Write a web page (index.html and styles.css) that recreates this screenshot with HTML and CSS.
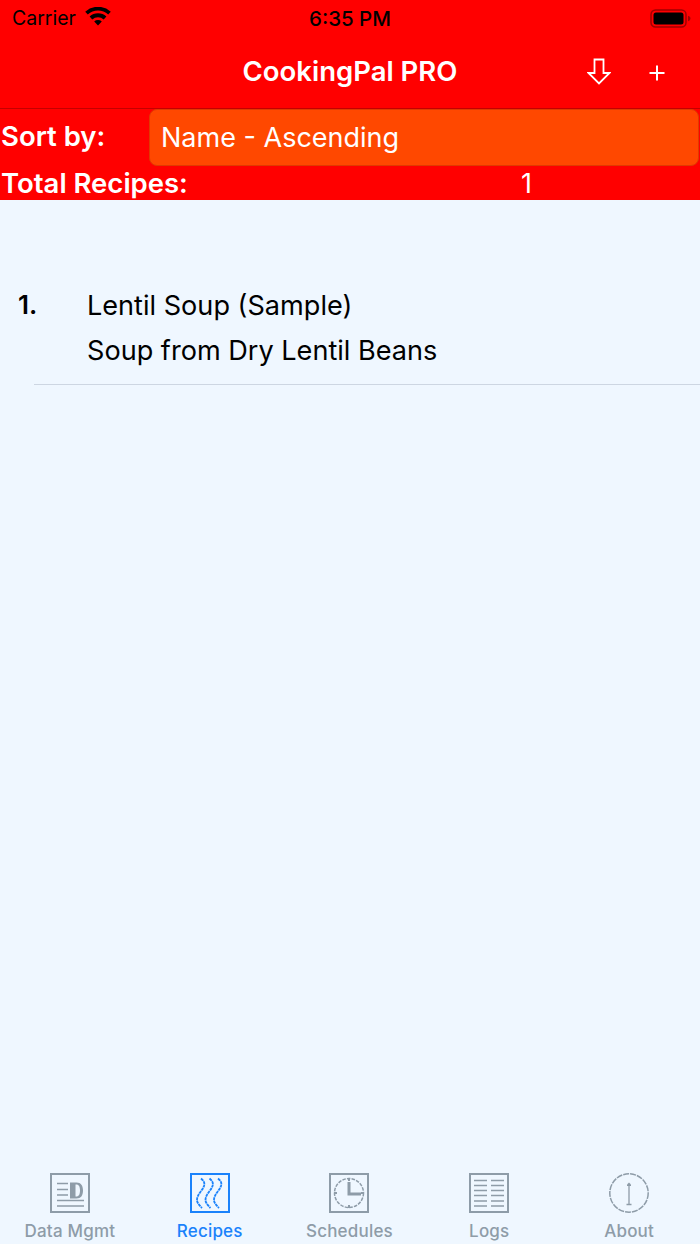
FILE: index.html
```html
<!DOCTYPE html>
<html>
<head>
  <meta charset="UTF-8"/>
  <title>CookingPal PRO</title>
  <link rel="stylesheet" href="styles.css">
</head>
<body>
<div class="app">
  <div class="header">
    <div class="status">
      <div class="status-left">
        <span class="carrier">Carrier</span>
        <svg class="wifi" width="26" height="19" viewBox="0 0 26 19">
          <path d="M13 18.500 9.200 14.400a5.600 5.600 0 0 1 7.600 0z" fill="#000"/>
          <path d="M7.300 12.400 4.600 9.500a12.400 12.400 0 0 1 16.800 0l-2.700 2.900a8.400 8.400 0 0 0-11.400 0z" fill="#000"/>
          <path d="M2.800 7.600 0.200 4.800a18.800 18.800 0 0 1 25.600 0l-2.600 2.800a15 15 0 0 0-20.400 0z" fill="#000"/>
        </svg>
      </div>
      <div class="clock">6:35 PM</div>
      <div class="status-right">
        <svg width="41" height="19" viewBox="0 0 41 19">
          <rect x="1" y="1" width="35" height="17" rx="4.500" fill="none" stroke="#a00000" stroke-width="1.500"/>
          <rect x="3.500" y="3.500" width="30" height="12" rx="2.500" fill="#000"/>
          <path d="M38 6.800c1.500.4 2.500 1.500 2.500 2.700s-1 2.300-2.500 2.700z" fill="#a00000"/>
        </svg>
      </div>
    </div>
    <div class="nav">
      <div class="nav-title">CookingPal PRO</div>
      <div class="nav-buttons">
        <svg class="nav-down" width="24" height="27" viewBox="0 0 24 27">
          <path d="M7.500 1.500h9v13.500h6L12 25.500 1.500 15h6z" fill="none" stroke="#fff" stroke-width="1.800"/>
        </svg>
        <svg class="nav-add" width="16" height="16" viewBox="0 0 16 16">
          <path d="M8 .5v15M.5 8h15" fill="none" stroke="#fff" stroke-width="2"/>
        </svg>
      </div>
    </div>
    <div class="sort-row">
      <div class="sort-label">Sort by:</div>
      <div class="sort-box">Name - Ascending</div>
    </div>
    <div class="total-row">
      <div class="total-label">Total Recipes:</div>
      <div class="total-count">1</div>
    </div>
  </div>

  <div class="list">
    <div class="recipe">
      <div class="recipe-num">1.</div>
      <div class="recipe-text">
        <div class="recipe-line">Lentil Soup (Sample)</div>
        <div class="recipe-line">Soup from Dry Lentil Beans</div>
      </div>
    </div>
  </div>

  <div class="tabs">
    <div class="tab">
      <svg class="tab-icon" width="40" height="40" viewBox="0 0 40 40">
        <rect x="1" y="1" width="38" height="38" fill="none" stroke="#8e9ca8" stroke-width="2"/>
        <path d="M7 10.500h11M7 16.500h11M7 22h11M7 27.500h27M7 33h27" fill="none" stroke="#8e9ca8" stroke-width="1.600"/>
        <path d="M20 9.500h6.500c4.500 0 6.500 3 6.500 8s-2 8-6.500 8H20zM25.500 11.500v12h.5c2.500 0 4-1.500 4-6s-1.500-6-4-6z" fill="#8e9ca8" fill-rule="evenodd"/>
      </svg>
      <div class="tab-label">Data Mgmt</div>
    </div>
    <div class="tab tab-active">
      <svg class="tab-icon" width="40" height="40" viewBox="0 0 40 40">
        <rect x="1" y="1" width="38" height="38" fill="none" stroke="#1a82fb" stroke-width="2"/>
        <g fill="none" stroke="#1a82fb" stroke-width="1.800" stroke-dasharray="3 .6">
          <path d="M11 5.500C14 8 15 10 14 13 13 17 7 21 7 27c0 3 3 6 5 8"/>
          <path d="M19.500 5.500c3 2.500 4 4.500 3 7.500-1 4-7 8-7 14 0 3 3 6 5 8"/>
          <path d="M28 5.500c3 2.500 4 4.500 3 7.500-1 4-7 8-7 14 0 3 3 6 5 8"/>
        </g>
      </svg>
      <div class="tab-label">Recipes</div>
    </div>
    <div class="tab">
      <svg class="tab-icon" width="40" height="40" viewBox="0 0 40 40">
        <rect x="1" y="1" width="38" height="38" fill="none" stroke="#8e9ca8" stroke-width="2"/>
        <circle cx="20" cy="20" r="14.500" fill="none" stroke="#8e9ca8" stroke-width="1.500" stroke-dasharray="3.500 1.200"/>
        <path d="M20 5v3M20 32v3M5 20h3M32 20h3" fill="none" stroke="#8e9ca8" stroke-width="2"/>
        <path d="M20 9v12h12" fill="none" stroke="#8e9ca8" stroke-width="3"/>
      </svg>
      <div class="tab-label">Schedules</div>
    </div>
    <div class="tab">
      <svg class="tab-icon" width="40" height="40" viewBox="0 0 40 40">
        <rect x="1" y="1" width="38" height="38" fill="none" stroke="#8e9ca8" stroke-width="2"/>
        <path d="M5 7.500h13M22 7.500h13M5 12.500h13M22 12.500h13M5 17.500h13M22 17.500h13M5 22.500h13M22 22.500h13M5 28h13M22 28h13M5 33h13M22 33h13" fill="none" stroke="#8e9ca8" stroke-width="1.600"/>
      </svg>
      <div class="tab-label">Logs</div>
    </div>
    <div class="tab">
      <svg class="tab-icon" width="40" height="40" viewBox="0 0 40 40">
        <circle cx="20" cy="20" r="19.200" fill="none" stroke="#8e9ca8" stroke-width="1.500" stroke-dasharray="6 1"/>
        <path d="M20 13v18M17.500 31.500h5" fill="none" stroke="#8e9ca8" stroke-width="1.300"/>
        <path d="M20 9.500l2 2v1.500h-4v-1.500z" fill="#8e9ca8"/>
      </svg>
      <div class="tab-label">About</div>
    </div>
  </div>
</div>
</body>
</html>
```

FILE: styles.css
```css
html, body {margin: 0; padding: 0}
body {font-family: Inter, "Liberation Sans", sans-serif; background-color: #eff7ff; color: #000}

.app {width: 700px; height: 1244px; display: flex; flex-direction: column; overflow: hidden}

.header {background-color: #ff0000; color: #fff; flex: none}

.status {height: 40px; box-sizing: border-box; padding-bottom: 4px; display: grid; grid-template-columns: 1fr auto 1fr; align-items: center; color: #000}
.status-left {display: flex; align-items: center; gap: 9px; padding-left: 12px}
.carrier {font-weight: 400; font-size: 19.5px}
.wifi {margin-top: -3px}
.clock {font-weight: 500; font-size: 20.5px}
.status-right {display: flex; justify-content: flex-end; padding-right: 9px}

.nav {position: relative; height: 69px; box-sizing: border-box; border-bottom: 1px solid #c40000; display: flex; align-items: center; justify-content: center; padding-bottom: 6px}
.nav-title {font-size: 27.5px; font-weight: 600}
.nav-buttons {position: absolute; right: 35px; top: 18px; display: flex; align-items: center; gap: 38px}
.nav-add {margin-top: 3px}

.sort-row {height: 57px; display: flex; align-items: center; padding: 0 1px}
.sort-label {width: 148px; flex: none; font-size: 27.5px; font-weight: 600; margin-top: -4px}
.sort-box {flex: 1; height: 57px; box-sizing: border-box; background-color: #ff4800; border: 1px solid #e03a00; border-radius: 8px; padding-left: 11px; font-size: 27px; line-height: 55px}

.total-row {height: 34px; display: flex; align-items: center; padding-left: 1px}
.total-label {width: 520px; flex: none; font-size: 27.5px; font-weight: 600}
.total-count {font-size: 27px}

.list {flex: 1; padding-top: 83px}
.recipe {margin-left: 34px; height: 102px; box-sizing: border-box; border-bottom: 1px solid #cdd6e2; display: flex}
.recipe-num {width: 53px; flex: none; margin-left: -16px; font-size: 26px; font-weight: 600; line-height: 44px}
.recipe-text {margin-left: 16px}
.recipe-line {font-size: 27.1px; line-height: 45px}

.tabs {height: 84px; flex: none; display: grid; grid-template-columns: repeat(5, 1fr); padding: 13px 1px 0 0; box-sizing: border-box}
.tab {display: flex; flex-direction: column; align-items: center; color: #8e9ca8}
.tab-active {color: #1a82fb}
.tab-icon {flex: none}
.tab-label {font-size: 17px; font-weight: 500; letter-spacing: 0.2px; line-height: 22px; margin-top: 7px}
```
